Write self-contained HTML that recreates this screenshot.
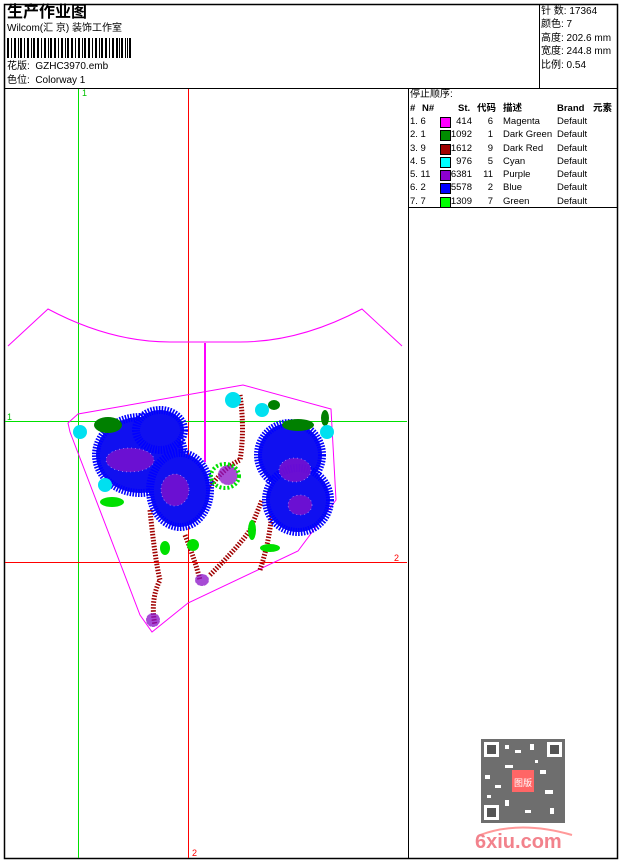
<!DOCTYPE html>
<html><head><meta charset="utf-8"><style>
body{margin:0;width:620px;height:860px;background:#fff;overflow:hidden;font-family:"Liberation Sans","Noto Sans CJK SC",sans-serif;}
.t{position:absolute;font-size:10px;color:#000;white-space:nowrap;line-height:12px}
.tb{position:absolute;left:409px;width:208px;font-size:9.5px;line-height:13.3px;font-family:'Liberation Sans','Noto Sans CJK SC',sans-serif;white-space:nowrap}
.tb div{position:relative;height:13.3px;width:208px}
.tb span{position:absolute;white-space:nowrap;top:0}
.tb span.sw{top:2px;width:9px;height:9px;border:1px solid #000;left:31px}
</style></head><body>
<svg width="620" height="860" style="position:absolute;left:0;top:0">
<rect x="4.5" y="4.5" width="613" height="854" fill="none" stroke="#000" stroke-width="1.5"/>
<line x1="4" y1="88.5" x2="618" y2="88.5" stroke="#000"/>
<line x1="539.5" y1="4" x2="539.5" y2="88" stroke="#000"/>
<line x1="408.5" y1="88" x2="408.5" y2="858" stroke="#000"/>
<line x1="408" y1="207.5" x2="618" y2="207.5" stroke="#000"/>
<g fill="#000">
<rect x="7" y="38" width="2" height="20"/><rect x="11" y="38" width="1" height="20"/><rect x="14" y="38" width="2" height="20"/><rect x="18" y="38" width="1" height="20"/><rect x="20" y="38" width="2" height="20"/><rect x="24" y="38" width="1" height="20"/><rect x="27" y="38" width="2" height="20"/><rect x="31" y="38" width="1" height="20"/><rect x="33" y="38" width="2" height="20"/><rect x="37" y="38" width="2" height="20"/><rect x="41" y="38" width="1" height="20"/><rect x="44" y="38" width="2" height="20"/><rect x="48" y="38" width="1" height="20"/><rect x="50" y="38" width="2" height="20"/><rect x="54" y="38" width="2" height="20"/><rect x="58" y="38" width="1" height="20"/><rect x="61" y="38" width="2" height="20"/><rect x="65" y="38" width="1" height="20"/><rect x="67" y="38" width="2" height="20"/><rect x="71" y="38" width="2" height="20"/><rect x="75" y="38" width="1" height="20"/><rect x="78" y="38" width="2" height="20"/><rect x="82" y="38" width="1" height="20"/><rect x="84" y="38" width="2" height="20"/><rect x="88" y="38" width="2" height="20"/><rect x="92" y="38" width="1" height="20"/><rect x="95" y="38" width="2" height="20"/><rect x="99" y="38" width="1" height="20"/><rect x="101" y="38" width="2" height="20"/><rect x="105" y="38" width="2" height="20"/><rect x="109" y="38" width="1" height="20"/><rect x="112" y="38" width="2" height="20"/><rect x="116" y="38" width="2" height="20"/><rect x="119" y="38" width="1" height="20"/><rect x="121" y="38" width="2" height="20"/><rect x="125" y="38" width="1" height="20"/><rect x="127" y="38" width="1" height="20"/><rect x="129" y="38" width="2" height="20"/>
</g>
<line x1="78.5" y1="89" x2="78.5" y2="858" stroke="#00e000"/>
<line x1="188.5" y1="89" x2="188.5" y2="858" stroke="#f00"/>
<line x1="5" y1="421.5" x2="407" y2="421.5" stroke="#00e000"/>
<line x1="5" y1="562.5" x2="407" y2="562.5" stroke="#f00"/>
<text x="82" y="96" font-size="9" fill="#00c000" font-family="Liberation Sans">1</text>
<text x="7" y="420" font-size="9" fill="#00c000" font-family="Liberation Sans">1</text>
<text x="394" y="561" font-size="9" fill="#f00" font-family="Liberation Sans">2</text>
<text x="192" y="856" font-size="9" fill="#f00" font-family="Liberation Sans">2</text>
<path d="M8,346 L48,309 Q110,342 170,342 L240,342 Q300,342 362,309 L402,346" fill="none" stroke="#f0f" stroke-width="1"/>
<line x1="205" y1="343" x2="205" y2="462" stroke="#f0f" stroke-width="2"/>
<polygon points="68,423 78,414 243,385 331,409 336,500 298,551 188,603 152,632 140,615 70,432" fill="none" stroke="#f0f"/>
<g fill="none" stroke="#a00000" stroke-width="5" stroke-dasharray="1.5 1.5">
<path d="M150,510 Q155,560 160,580 Q150,600 155,625"/>
<path d="M185,535 Q195,560 200,580"/>
<path d="M205,495 Q220,470 240,460 Q245,430 240,395"/>
<path d="M210,575 Q240,545 250,530 Q258,510 262,500"/>
<path d="M260,570 Q270,540 272,510"/>
</g>
<g stroke="#0000ff" stroke-width="8" stroke-dasharray="1.5 1.2" fill="#1010f0">
<ellipse cx="140" cy="455" rx="44" ry="38"/>
<ellipse cx="180" cy="490" rx="30" ry="37"/>
<ellipse cx="160" cy="430" rx="24" ry="20"/>
<ellipse cx="290" cy="455" rx="32" ry="32"/>
<ellipse cx="298" cy="500" rx="32" ry="32"/>
</g>
<g fill="#8a10c8" opacity="0.75" stroke="#fff" stroke-width="0.6" stroke-dasharray="1 3">
<ellipse cx="130" cy="460" rx="24" ry="12"/><ellipse cx="175" cy="490" rx="14" ry="16"/><ellipse cx="295" cy="470" rx="16" ry="12"/><ellipse cx="300" cy="505" rx="12" ry="10"/><ellipse cx="228" cy="475" rx="10" ry="10"/><ellipse cx="153" cy="620" rx="7" ry="7"/><ellipse cx="202" cy="580" rx="7" ry="6"/>
</g>
<g fill="#00e000"><ellipse cx="225" cy="476" rx="14" ry="12" fill="none" stroke="#00e000" stroke-width="4" stroke-dasharray="2 2"/><ellipse cx="112" cy="502" rx="12" ry="5"/><ellipse cx="270" cy="548" rx="10" ry="4"/><ellipse cx="165" cy="548" rx="5" ry="7"/><ellipse cx="252" cy="530" rx="4" ry="10"/><ellipse cx="193" cy="545" rx="6" ry="6"/></g>
<g fill="#008000"><ellipse cx="108" cy="425" rx="14" ry="8"/><ellipse cx="298" cy="425" rx="16" ry="6"/><ellipse cx="274" cy="405" rx="6" ry="5"/><ellipse cx="325" cy="418" rx="4" ry="8"/></g>
<g fill="#00e0f0"><circle cx="233" cy="400" r="8"/><circle cx="262" cy="410" r="7"/><circle cx="80" cy="432" r="7"/><circle cx="327" cy="432" r="7"/><circle cx="105" cy="485" r="7"/></g>
<rect x="481" y="739" width="84" height="84" fill="#555" opacity="0.85"/>
<g fill="#fff">
<rect x="484" y="742" width="15" height="15"/><rect x="547" y="742" width="15" height="15"/><rect x="484" y="805" width="15" height="15"/>
<rect x="505" y="745" width="4" height="4"/><rect x="515" y="750" width="6" height="3"/><rect x="530" y="744" width="4" height="6"/><rect x="505" y="765" width="8" height="3"/><rect x="540" y="770" width="6" height="4"/><rect x="485" y="775" width="5" height="4"/><rect x="495" y="785" width="6" height="3"/><rect x="545" y="790" width="8" height="4"/><rect x="505" y="800" width="4" height="6"/><rect x="525" y="810" width="6" height="3"/><rect x="550" y="808" width="4" height="6"/><rect x="535" y="760" width="3" height="3"/><rect x="487" y="795" width="4" height="3"/>
</g>
<g fill="#555"><rect x="487" y="745" width="9" height="9"/><rect x="550" y="745" width="9" height="9"/><rect x="487" y="808" width="9" height="9"/></g>
<rect x="512" y="770" width="22" height="22" fill="#f66"/>
<text x="523" y="786" font-size="9" fill="#fff" text-anchor="middle" font-family="Noto Sans CJK SC">图版</text>
<path d="M480,835 Q520,820 572,835" fill="none" stroke="#f99" stroke-width="2"/>
<text x="475" y="848" font-size="20" font-weight="bold" fill="#f2828c" font-family="Liberation Sans">6xiu.com</text>
</svg>
<div class="t" style="left:7px;top:3px;font-size:16px;line-height:20px;font-weight:bold">生产作业图</div>
<div class="t" style="left:7px;top:23px">Wilcom(汇 京) 装饰工作室</div>
<div class="t" style="left:7px;top:61px">花版:&nbsp; GZHC3970.emb</div>
<div class="t" style="left:7px;top:75px">色位:&nbsp; Colorway 1</div>
<div class="t" style="left:541px;top:5px;line-height:13.4px">针 数: 17364<br>颜色: 7<br>高度: 202.6 mm<br>宽度: 244.8 mm<br>比例: 0.54</div>
<div class="t" style="left:410px;top:89px">停止顺序:</div>
<div class="tb" style="top:102px;font-weight:bold">
<div style="text-decoration:underline"><span style="left:1px">#</span><span style="left:13px">N#</span><span style="left:49px">St.</span><span style="left:68px">代码</span><span style="left:94px">描述</span><span style="left:148px">Brand</span><span style="left:184px">元素</span></div>
</div>
<div class="tb" style="top:115px">
<div><span style="left:1px">1. 6</span><span class="sw" style="background:#f0f"></span><span style="left:44px;width:19px;text-align:right">414</span><span style="left:72px;width:12px;text-align:right">6</span><span style="left:94px">Magenta</span><span style="left:148px">Default</span></div>
<div><span style="left:1px">2. 1</span><span class="sw" style="background:#008c00"></span><span style="left:40px;width:23px;text-align:right">1092</span><span style="left:72px;width:12px;text-align:right">1</span><span style="left:94px">Dark Green</span><span style="left:148px">Default</span></div>
<div><span style="left:1px">3. 9</span><span class="sw" style="background:#a00000"></span><span style="left:40px;width:23px;text-align:right">1612</span><span style="left:72px;width:12px;text-align:right">9</span><span style="left:94px">Dark Red</span><span style="left:148px">Default</span></div>
<div><span style="left:1px">4. 5</span><span class="sw" style="background:#0ff"></span><span style="left:40px;width:23px;text-align:right">976</span><span style="left:72px;width:12px;text-align:right">5</span><span style="left:94px">Cyan</span><span style="left:148px">Default</span></div>
<div><span style="left:1px">5. 11</span><span class="sw" style="background:#8c00d0"></span><span style="left:40px;width:23px;text-align:right">6381</span><span style="left:68px;width:16px;text-align:right">11</span><span style="left:94px">Purple</span><span style="left:148px">Default</span></div>
<div><span style="left:1px">6. 2</span><span class="sw" style="background:#00f"></span><span style="left:40px;width:23px;text-align:right">5578</span><span style="left:72px;width:12px;text-align:right">2</span><span style="left:94px">Blue</span><span style="left:148px">Default</span></div>
<div><span style="left:1px">7. 7</span><span class="sw" style="background:#0f0"></span><span style="left:40px;width:23px;text-align:right">1309</span><span style="left:72px;width:12px;text-align:right">7</span><span style="left:94px">Green</span><span style="left:148px">Default</span></div>
</div>
</body></html>
